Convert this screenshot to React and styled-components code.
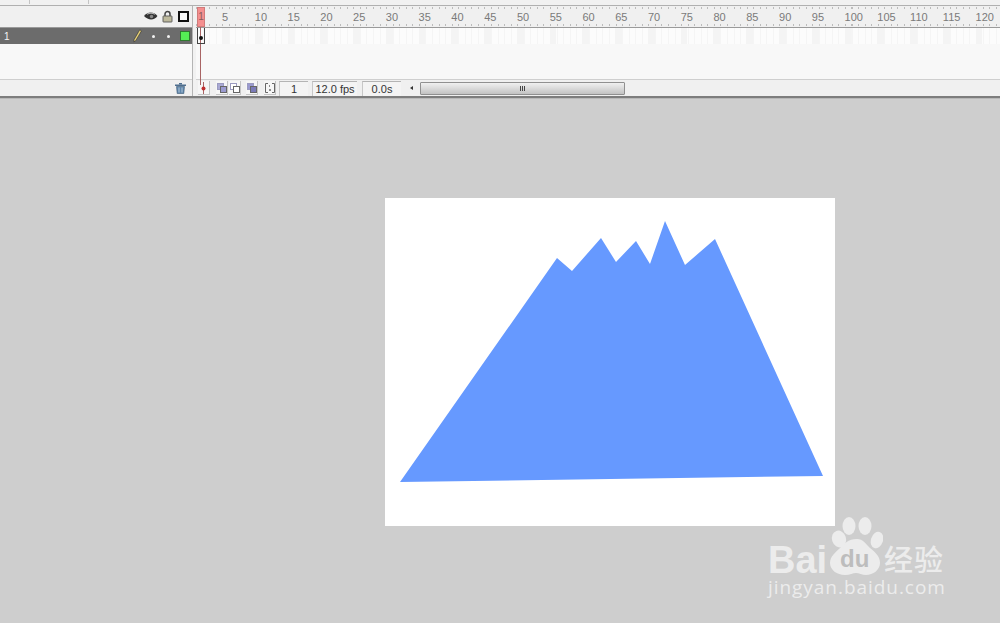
import React from 'react'
import styled, { createGlobalStyle } from 'styled-components'

const GlobalStyle = createGlobalStyle`
  html, body {
    margin: 0;
    padding: 0;
    height: 100%;
    background: #cecece;
    overflow: hidden;
    font-family: "Liberation Sans", Arial, sans-serif;
  }
`

const FRAME = 6.555

const Page = styled.div`
  position: relative;
  width: 1000px;
  height: 623px;
  overflow: hidden;
`
const TopStrip = styled.div`
  height: 5px;
  background: #f1f1f1;
  border-bottom: 1px solid #b0b0b0;
  display: flex;
  padding-left: 29px;
  gap: 58px;
`
const Notch = styled.span`
  width: 1px;
  height: 4px;
  background: #c4c4c4;
`
const Timeline = styled.div`
  display: flex;
  height: 90px;
  background: #f1f1f1;
`
const LayerPanel = styled.div`
  width: 192px;
  display: flex;
  flex-direction: column;
`
const Divider = styled.div`
  width: 3px;
  margin-right: 1px;
  background: #f1f1f1;
  border-left: 1px solid #b4b4b4;
  box-sizing: border-box;
`
const FramePanel = styled.div`
  position: relative;
  flex: 1;
  display: flex;
  flex-direction: column;
  min-width: 0;
`
const HeaderRow = styled.div`
  height: 21px;
  display: flex;
  align-items: center;
  justify-content: flex-end;
  gap: 4px;
  padding-right: 3px;
  border-bottom: 1px solid #9a9a9a;
  background: #f0f0f0;
`
const LayerRow = styled.div`
  height: 16px;
  display: flex;
  align-items: center;
  background: #6c6c6c;
  color: #f4f4f4;
  font-size: 10px;
  padding-left: 4px;
`
const LayerName = styled.span`
  flex: 1;
`
const LayerIcons = styled.div`
  display: flex;
  align-items: center;
  margin-right: 2px;
`
const Dot = styled.span`
  width: 3px;
  height: 3px;
  border-radius: 50%;
  background: #f2f2f2;
  margin-left: ${p => p.$gap}px;
`
const ColorSwatch = styled.span`
  width: 8px;
  height: 8px;
  margin-left: 10px;
  background: #55ee55;
  border: 1px solid #2f7a2f;
`
const OutlineBox = styled.span`
  width: 7px;
  height: 7px;
  border: 2px solid #111;
  background: #fafafa;
  margin-left: 1px;
`
const EmptyArea = styled.div`
  flex: 1;
  background: #f8f8f8;
  border-bottom: 1px solid #cfcfcf;
`
const FooterLeft = styled.div`
  height: 16px;
  display: flex;
  align-items: center;
  justify-content: flex-end;
  padding-right: 6px;
  background: #f0f0f0;
`
const Ruler = styled.div`
  height: 21px;
  box-sizing: content-box;
  display: flex;
  align-items: center;
  padding-left: 26px;
  border-bottom: 1px solid #9a9a9a;
  color: #7a7a7a;
  font-size: 11px;
  white-space: nowrap;
  overflow: hidden;
  background:
    repeating-linear-gradient(90deg, #bcbcbc 0 1px, transparent 1px ${FRAME}px) 0 1px / 100% 2px no-repeat,
    repeating-linear-gradient(90deg, #bcbcbc 0 1px, transparent 1px ${FRAME}px) 0 18px / 100% 2px no-repeat,
    #f0f0f0;
`
const RulerLabel = styled.span`
  flex: 0 0 ${FRAME * 5}px;
`
const FrameRow = styled.div`
  height: 16px;
  background:
    repeating-linear-gradient(90deg, #f5f5f5 0 1px, #fcfcfc 1px ${FRAME}px);
  display: flex;
`
const FrameEmpty = styled.div`
  flex: 1;
  background: #f8f8f8;
  border-bottom: 1px solid #cfcfcf;
`
const FifthCell = styled.span`
  flex: 0 0 ${FRAME * 5}px;
  background: linear-gradient(90deg, transparent ${FRAME * 4}px, #f4f4f4 ${FRAME * 4}px);
`
const Controls = styled.div`
  height: 16px;
  display: flex;
  align-items: center;
  background: #f0f0f0;
  padding-left: 2px;
`
const CtrlButton = styled.span`
  width: ${p => p.$w || 11}px;
  height: 13px;
  display: flex;
  align-items: center;
  justify-content: center;
  margin-left: ${p => p.$gap || 0}px;
  background: #f6f6f6;
  border-right: 1px solid #c4c4c4;
  border-bottom: 1px solid #c4c4c4;
`
const Readout = styled.span`
  box-sizing: border-box;
  height: 15px;
  width: ${p => p.$w}px;
  margin-left: ${p => p.$gap}px;
  border-top: 1px solid #b4b4b4;
  border-left: 1px solid #c8c8c8;
  background: #f4f4f4;
  color: #333;
  font-size: 11px;
  line-height: 14px;
  text-align: center;
  white-space: nowrap;
`
const ScrollArrow = styled.span`
  width: 0;
  height: 0;
  margin-left: 9px;
  border-top: 2.5px solid transparent;
  border-bottom: 2.5px solid transparent;
  border-right: 3px solid #333;
`
const ScrollThumb = styled.span`
  box-sizing: border-box;
  width: 205px;
  height: 13px;
  margin-left: 7px;
  border: 1px solid #909090;
  border-radius: 1px;
  background: linear-gradient(#f0f0f0, #dcdcdc 45%, #c2c2c2);
  display: flex;
  align-items: center;
  justify-content: center;
  gap: 1px;
`
const Grip = styled.span`
  width: 1px;
  height: 5px;
  background: #444;
`
const Playhead = styled.div`
  position: absolute;
  left: 1px;
  top: 1px;
  width: 8px;
  height: 20px;
  box-sizing: border-box;
  background: #f48f8f;
  border: 1px solid #d07a7a;
  color: #8a5a5a;
  font-size: 10px;
  line-height: 18px;
  text-align: center;
`
const PlayLine = styled.div`
  position: absolute;
  left: 4px;
  top: 21px;
  width: 1px;
  height: 58px;
  background: #a86464;
`
const Keyframe = styled.div`
  position: absolute;
  left: 1px;
  top: 22px;
  width: 8px;
  height: 16px;
  box-sizing: border-box;
  border: 1px solid #444;
  border-top: none;
  background: transparent;
  &::after {
    content: '';
    position: absolute;
    left: 1px;
    top: 8px;
    width: 4px;
    height: 4px;
    border-radius: 50%;
    background: #111;
  }
`
const Bar = styled.div`
  height: 3px;
  background: #7d7d7d;
  border-bottom: 1px solid #b8b8b8;
  box-sizing: border-box;
`
const Workspace = styled.main`
  padding: 99px 0 0 385px;
  background: #cecece;
`
const Stage = styled.div`
  width: 450px;
  height: 328px;
  background: #fff;
`
const Mountain = styled.svg`
  display: block;
  width: 100%;
  height: 100%;
`
const Watermark = styled.div`
  position: absolute;
  left: 768px;
  top: 515px;
  width: 180px;
  color: #ececec;
`
const MarkRow = styled.div`
  display: flex;
  align-items: flex-end;
  height: 60px;
`
const Bai = styled.span`
  font-size: 38px;
  font-weight: 700;
  line-height: 30px;
  width: 59px;
`
const Paw = styled.div`
  position: relative;
  width: 57px;
  height: 60px;
  flex: none;
`
const Du = styled.span`
  position: absolute;
  left: 13px;
  top: 32px;
  font-size: 24px;
  font-weight: 700;
  line-height: 24px;
  color: #bdbdbd;
`
const Jingyan = styled.span`
  font-family: "Noto Sans CJK SC", sans-serif;
  font-size: 29px;
  font-weight: 500;
  line-height: 30px;
  white-space: nowrap;
  margin-bottom: 2px;
  letter-spacing: 1px;
`
const Domain = styled.div`
  font-family: "Open Sans", sans-serif;
  font-size: 19px;
  line-height: 24px;
  letter-spacing: 0.95px;
  white-space: nowrap;
`

const rulerLabels = Array.from({ length: 24 }, (_, i) => (i + 1) * 5)
const peak = '15,284 172,60 187,73 216,40 231,64 251,43 265,66 280,23 300,67 330,41 438,278'

const Eye = () => (
  <svg width="14" height="11" viewBox="0 0 13 10">
    <path d="M0 4.5C3 .5 9 0 12.5 4.5 10 8.5 4 9 0 4.5z" fill="#333" />
    <path d="M3 3c2-1.5 5-1.5 7 0" stroke="#ddd" strokeWidth=".8" fill="none" />
    <circle cx="7" cy="5" r="1.6" fill="#888" />
  </svg>
)

const Lock = () => (
  <svg width="11" height="13" viewBox="0 0 11 12">
    <path d="M3 6V3.5a2.5 2.5 0 0 1 5 0V6" stroke="#444" strokeWidth="1.5" fill="none" />
    <rect x="1" y="5.5" width="9" height="6" rx=".5" fill="#bdb99c" stroke="#555" strokeWidth=".9" />
  </svg>
)

const Pencil = () => (
  <svg width="9" height="14" viewBox="0 0 8 12">
    <path d="M6 .5l1.5 1L2.5 10 .8 11.2 1 9z" fill="#e8d27a" stroke="#2b2b2b" strokeWidth=".5" />
  </svg>
)

const Trash = () => (
  <svg width="11" height="11" viewBox="0 0 11 11">
    <rect x="0" y="1.5" width="11" height="1.5" fill="#4f6f8f" />
    <rect x="4" y="0" width="3" height="1.5" fill="#4f6f8f" />
    <path d="M1.5 3.5h8l-.7 7H2.2z" fill="#5f86ab" stroke="#3e5a75" strokeWidth=".6" />
    <path d="M4 4.5v5M7 4.5v5" stroke="#d8e4ee" strokeWidth=".7" />
  </svg>
)

const CenterMarker = () => (
  <svg width="7" height="12" viewBox="0 0 7 12">
    <path d="M3.5 0v12" stroke="#a86464" />
    <circle cx="3.5" cy="6.5" r="2" fill="#c03030" />
  </svg>
)

const Onion = ({ back, front }) => (
  <svg width="10" height="10" viewBox="0 0 10 10">
    <rect x=".5" y=".5" width="6" height="6" fill={back} stroke="#9a9ac0" />
    <rect x="3.5" y="3.5" width="6" height="6" fill={front} stroke="#666" />
  </svg>
)

const Brackets = () => (
  <svg width="10" height="10" viewBox="0 0 10 10" fill="none" stroke="#666">
    <path d="M3 .5H.5v9H3M7 .5h2.5v9H7" />
    <path d="M4 3h1M4 7h2" stroke="#222" />
  </svg>
)

const PawPrint = () => (
  <svg width="56" height="60" viewBox="0 0 56 60">
    <g fill="#ececec">
      <ellipse cx="12" cy="24" rx="7" ry="8.5" transform="rotate(-18 12 24)" />
      <ellipse cx="22" cy="11" rx="6.5" ry="9" />
      <ellipse cx="38" cy="11" rx="6.5" ry="9" />
      <ellipse cx="50" cy="25" rx="6" ry="8.5" transform="rotate(18 50 25)" />
      <path d="M30 24c6 0 9 5 13 9 5 4 10 8 10 15 0 7-7 12-14 12-4 0-7-2-10-2s-6 2-11 2C10 60 3 55 3 48c0-7 6-11 10-15s8-9 17-9z" />
    </g>
  </svg>
)

function App () {
  return (
    <Page>
      <GlobalStyle />
      <TopStrip><Notch /><Notch /></TopStrip>
      <Timeline>
        <LayerPanel>
          <HeaderRow>
            <Eye />
            <Lock />
            <OutlineBox />
          </HeaderRow>
          <LayerRow>
            <LayerName>1</LayerName>
            <LayerIcons>
              <Pencil />
              <Dot $gap={10} />
              <Dot $gap={12} />
              <ColorSwatch />
            </LayerIcons>
          </LayerRow>
          <EmptyArea />
          <FooterLeft><Trash /></FooterLeft>
        </LayerPanel>
        <Divider />
        <FramePanel>
          <Ruler>
            {rulerLabels.map(n => <RulerLabel key={n}>{n}</RulerLabel>)}
          </Ruler>
          <FrameRow>
            {rulerLabels.map(n => <FifthCell key={n} />)}
          </FrameRow>
          <FrameEmpty />
          <Controls>
            <CtrlButton><CenterMarker /></CtrlButton>
            <CtrlButton $gap={6}><Onion back="#a9a9d4" front="#9a9ad0" /></CtrlButton>
            <CtrlButton $gap={1}><Onion back="#fff" front="#fff" /></CtrlButton>
            <CtrlButton $gap={5}><Onion back="#9a9ad0" front="#7a7ab8" /></CtrlButton>
            <CtrlButton $gap={6}><Brackets /></CtrlButton>
            <Readout $w={29} $gap={3}>1</Readout>
            <Readout $w={45} $gap={4}>12.0 fps</Readout>
            <Readout $w={39} $gap={5}>0.0s</Readout>
            <ScrollArrow />
            <ScrollThumb><Grip /><Grip /><Grip /></ScrollThumb>
          </Controls>
          <Playhead>1</Playhead>
          <PlayLine />
          <Keyframe />
        </FramePanel>
      </Timeline>
      <Bar />
      <Workspace>
        <Stage>
          <Mountain viewBox="0 0 450 328">
            <polygon points={peak} fill="#6699ff" />
          </Mountain>
        </Stage>
      </Workspace>
      <Watermark>
        <MarkRow>
          <Bai>Bai</Bai>
          <Paw>
            <PawPrint />
            <Du>du</Du>
          </Paw>
          <Jingyan>经验</Jingyan>
        </MarkRow>
        <Domain>jingyan.baidu.com</Domain>
      </Watermark>
    </Page>
  )
}

export default App
